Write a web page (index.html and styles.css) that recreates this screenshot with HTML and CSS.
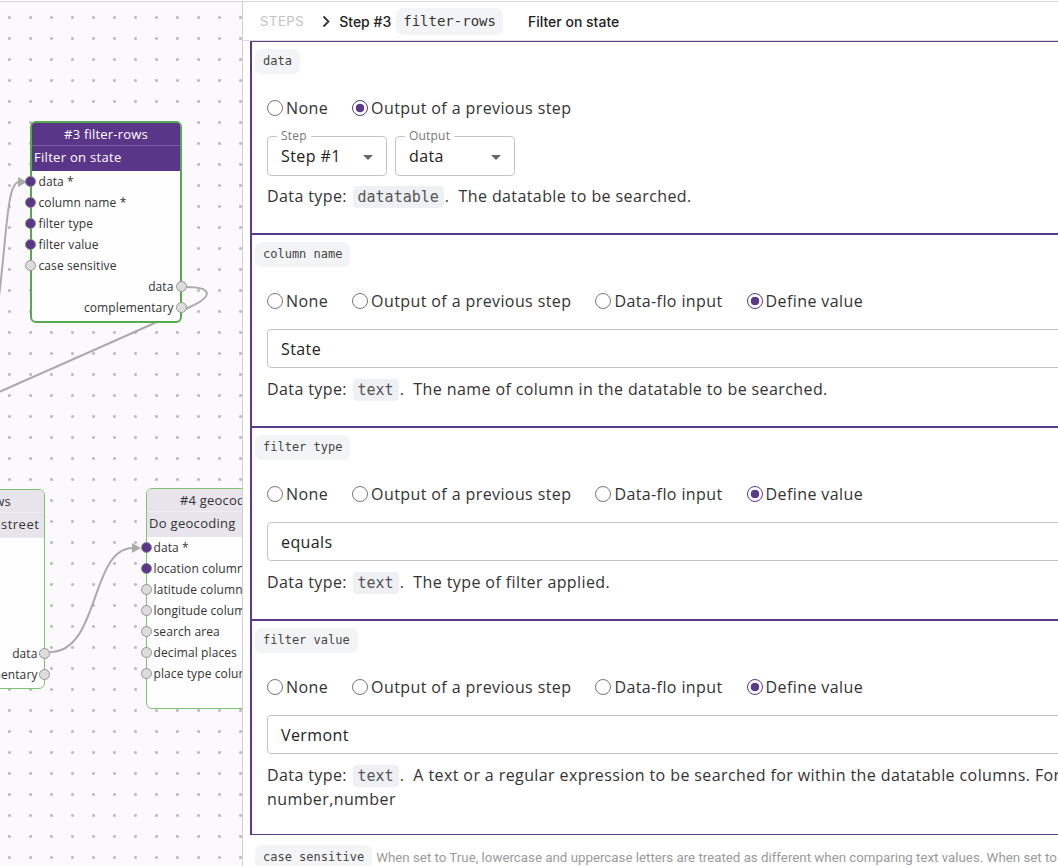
FILE: index.html
```html
<!DOCTYPE html>
<html lang="en">
<head>
<meta charset="utf-8">
<title>Steps</title>
<link rel="stylesheet" href="styles.css">
</head>
<body>
<div class="app">
  <div class="canvas">
    <svg class="edges" width="242" height="866" viewBox="0 0 242 866">
      <path d="M-12,360 C8,275 3,182 19,182"/>
      <polygon points="18,177 27,182 18,187"/>
      <path d="M186,287 C212,287 214,296 190,307 C140,330 60,365 -10,396"/>
      <path d="M50,652 C100,652 90,548 133,548"/>
      <polygon points="132,543 141,548 132,553"/>
    </svg>

    <div class="node node-left">
      <div class="node-title">#2 filter-rows</div>
      <div class="node-sub">Filter rows on a street</div>
      <div class="node-body">
        <div class="port in"><span class="dot filled"></span>data *</div>
        <div class="port in"><span class="dot filled"></span>column name *</div>
        <div class="port in"><span class="dot filled"></span>filter type</div>
        <div class="port in"><span class="dot filled"></span>filter value</div>
        <div class="port in"><span class="dot"></span>case sensitive</div>
        <div class="port out">data<span class="dot"></span></div>
        <div class="port out">complementary<span class="dot"></span></div>
      </div>
    </div>

    <div class="node node-geo">
      <div class="node-title">#4 geocoding</div>
      <div class="node-sub">Do geocoding</div>
      <div class="node-body">
        <div class="port in"><span class="dot filled"></span>data *</div>
        <div class="port in"><span class="dot filled"></span>location column</div>
        <div class="port in"><span class="dot"></span>latitude column</div>
        <div class="port in"><span class="dot"></span>longitude column</div>
        <div class="port in"><span class="dot"></span>search area</div>
        <div class="port in"><span class="dot"></span>decimal places</div>
        <div class="port in"><span class="dot"></span>place type column</div>
        <div class="port out">data<span class="dot"></span></div>
      </div>
    </div>

    <div class="node node-active">
      <div class="node-title">#3 filter-rows</div>
      <div class="node-sub">Filter on state</div>
      <div class="node-body">
        <div class="port in"><span class="dot filled"></span>data *</div>
        <div class="port in"><span class="dot filled"></span>column name *</div>
        <div class="port in"><span class="dot filled"></span>filter type</div>
        <div class="port in"><span class="dot filled"></span>filter value</div>
        <div class="port in"><span class="dot"></span>case sensitive</div>
        <div class="port out">data<span class="dot"></span></div>
        <div class="port out">complementary<span class="dot"></span></div>
      </div>
    </div>
  </div>

  <div class="panel">
    <div class="steps-bar">
      <span class="steps-label">STEPS</span>
      <svg class="chevron" width="9" height="13" viewBox="0 0 9 13"><polyline points="1.5,1.5 6.5,6.5 1.5,11.5"/></svg>
      <span class="step-num">Step #3</span>
      <span class="step-fn">filter-rows</span>
      <span class="step-title">Filter on state</span>
    </div>

    <div class="sections">
      <section class="param">
        <span class="tag">data</span>
        <div class="param-body">
          <div class="radios">
            <label class="radio"><span class="radio-circle"></span>None</label>
            <label class="radio checked"><span class="radio-circle"></span>Output of a previous step</label>
          </div>
          <div class="selects">
            <div class="select"><span class="select-label">Step</span>Step #1<span class="caret"></span></div>
            <div class="select"><span class="select-label">Output</span>data<span class="caret"></span></div>
          </div>
          <p class="dtype dtype-tight">Data type: <code class="code">datatable</code>.&nbsp; The datatable to be searched.</p>
        </div>
      </section>

      <section class="param">
        <span class="tag">column name</span>
        <div class="param-body">
          <div class="radios">
            <label class="radio"><span class="radio-circle"></span>None</label>
            <label class="radio"><span class="radio-circle"></span>Output of a previous step</label>
            <label class="radio"><span class="radio-circle"></span>Data-flo input</label>
            <label class="radio checked"><span class="radio-circle"></span>Define value</label>
          </div>
          <div class="input">State</div>
          <p class="dtype">Data type: <code class="code">text</code>.&nbsp; The name of column in the datatable to be searched.</p>
        </div>
      </section>

      <section class="param">
        <span class="tag">filter type</span>
        <div class="param-body">
          <div class="radios">
            <label class="radio"><span class="radio-circle"></span>None</label>
            <label class="radio"><span class="radio-circle"></span>Output of a previous step</label>
            <label class="radio"><span class="radio-circle"></span>Data-flo input</label>
            <label class="radio checked"><span class="radio-circle"></span>Define value</label>
          </div>
          <div class="input">equals</div>
          <p class="dtype">Data type: <code class="code">text</code>.&nbsp; The type of filter applied.</p>
        </div>
      </section>

      <section class="param param-last">
        <span class="tag">filter value</span>
        <div class="param-body">
          <div class="radios">
            <label class="radio"><span class="radio-circle"></span>None</label>
            <label class="radio"><span class="radio-circle"></span>Output of a previous step</label>
            <label class="radio"><span class="radio-circle"></span>Data-flo input</label>
            <label class="radio checked"><span class="radio-circle"></span>Define value</label>
          </div>
          <div class="input">Vermont</div>
          <p class="dtype">Data type: <code class="code">text</code>.&nbsp; A text or a regular expression to be searched for within the datatable columns. For ranges: number,number</p>
        </div>
      </section>

      <div class="param-collapsed">
        <span class="tag">case sensitive</span>
        <span class="param-help">When set to True, lowercase and uppercase letters are treated as different when comparing text values. When set to False, they are treated as equal.</span>
      </div>
    </div>
  </div>
</div>
</body>
</html>
```

FILE: styles.css
```css
* { box-sizing: border-box; }

html, body {
  margin: 0;
  height: 100%;
}

body {
  padding-top: 1px;
  background: #ffffff;
  overflow: hidden;
  font-family: "Open Sans", "Noto Sans", sans-serif;
  color: #333;
}

.app {
  display: flex;
  height: 865px;
  border-top: 1px solid #d4d4d4;
}

/* ---------- canvas ---------- */
.canvas {
  position: relative;
  flex: none;
  width: 243px;
  border-right: 1px solid #cfcfcf;
  overflow: hidden;
  background-color: #fcf9fc;
  background-image: radial-gradient(circle, #bfbbc4 1.2px, transparent 1.7px);
  background-size: 21px 21px;
  background-position: -1px 5px;
}

.edges {
  position: absolute;
  left: 0;
  top: -2px;
}

.edges path {
  fill: none;
  stroke: #ababab;
  stroke-width: 2;
}

.edges polygon {
  fill: #ababab;
}

.node {
  --bw: 1px;
  position: absolute;
  width: 152px;
  border: var(--bw) solid #7cc474;
  border-radius: 6px;
  background: #fdfefd;
  font-size: 12px;
  letter-spacing: 0.1px;
  color: #333;
  padding-bottom: 3px;
}

.node-active {
  --bw: 2.5px;
  left: 30px;
  top: 119px;
  border-color: #57a84f;
  background: #fefefe;
}

.node-geo {
  left: 146px;
  top: 486px;
}

.node-left {
  left: -107px;
  top: 487px;
}

.node-title {
  height: 22px;
  line-height: 23px;
  text-align: center;
  font-size: 13px;
  letter-spacing: 0.2px;
  background: #e7e5eb;
  border-radius: 5px 5px 0 0;
  white-space: nowrap;
}

.node-sub {
  height: 26px;
  line-height: 22px;
  padding-left: 2px;
  font-size: 13px;
  letter-spacing: 0.3px;
  background: #e7e5eb;
  border-top: 1px solid #efedf2;
  white-space: nowrap;
}

.node-left .node-sub {
  letter-spacing: 0.5px;
}

.node-active .node-title,
.node-active .node-sub {
  background: #5a3689;
  color: #ffffff;
}

.node-active .node-title { border-radius: 3px 3px 0 0; }

.node-active .node-sub {
  border-top-color: #7b5ca5;
}

.port {
  position: relative;
  height: 21px;
  line-height: 21px;
  padding-left: 6.5px;
  white-space: nowrap;
}

.port.out {
  text-align: right;
  padding-left: 0;
  padding-right: 6.5px;
}

.dot {
  position: absolute;
  top: 5px;
  width: 11px;
  height: 11px;
  border-radius: 50%;
  border: 1.5px solid #969696;
  background: #dcdcdc;
}

.port.in .dot { left: calc(var(--bw) / -2 - 5.5px); }
.port.out .dot { right: calc(var(--bw) / -2 - 5.5px); }

.dot.filled {
  background: #5a3689;
  border-color: #8c8c8c;
}

/* ---------- panel ---------- */
.panel {
  flex: 1;
  min-width: 0;
  overflow: hidden;
  background: #ffffff;
}

.steps-bar {
  display: flex;
  align-items: center;
  height: 39px;
  padding-left: 17px;
  border-bottom: 1px solid #dddddd;
  font-family: Inter, "Open Sans", sans-serif;
  font-size: 14px;
  font-weight: 500;
  color: #222;
}

.steps-label {
  font-size: 13px;
  font-weight: 400;
  letter-spacing: 0.6px;
  color: #c2c2c2;
}

.chevron {
  margin-left: 18px;
  margin-right: 8px;
}

.chevron polyline {
  fill: none;
  stroke: #333;
  stroke-width: 1.8;
}

.step-fn {
  margin-left: 5px;
  height: 27px;
  line-height: 27px;
  padding: 0 7px;
  border-radius: 7px;
  background: #f3f4f6;
  font-family: "DejaVu Sans Mono", monospace;
  font-size: 14px;
  font-weight: 400;
  color: #333;
}

.step-title {
  margin-left: 25px;
}

.sections {
  width: 950px;
  padding-left: 7px;
}

.param {
  display: block;
  border: 1px solid #5b3a8b;
  border-left-width: 2px;
  padding: 7px 0 25px 3px;
}

.param-last {
  padding-bottom: 23px;
}

.tag {
  display: block;
  width: fit-content;
  height: 25px;
  line-height: 25px;
  padding: 0 8px;
  border-radius: 7px;
  background: #f3f4f6;
  font-family: "DejaVu Sans Mono", monospace;
  font-size: 12px;
  color: #444;
  white-space: nowrap;
}

.param-body {
  padding-left: 12px;
}

.radios {
  display: flex;
  align-items: center;
  gap: 24px;
  height: 24px;
  margin-top: 22px;
}

.radio {
  display: flex;
  align-items: center;
  gap: 3px;
  font-size: 16px;
  line-height: 24px;
  letter-spacing: 0.4px;
  color: #333;
}

.radio-circle {
  width: 16px;
  height: 16px;
  border: 1.5px solid #777;
  border-radius: 50%;
}

.radio.checked .radio-circle {
  border-color: #5b3a8b;
  background: radial-gradient(circle, #5b3a8b 4px, transparent 4.6px);
}

.selects {
  display: flex;
  gap: 8px;
  margin-top: 16px;
}

.select {
  position: relative;
  display: flex;
  align-items: center;
  width: 120px;
  height: 40px;
  padding-left: 13px;
  border: 1px solid #c4c4c4;
  border-radius: 4px;
  font-size: 16px;
  letter-spacing: 0.4px;
  color: #222;
}

.select-label {
  position: absolute;
  top: -8px;
  left: 9px;
  padding: 0 4px;
  background: #fff;
  font-size: 12px;
  line-height: 14px;
  letter-spacing: 0.2px;
  color: #777;
}

.caret {
  position: absolute;
  right: 13px;
  top: 18px;
  border-top: 5px solid #666;
  border-left: 5px solid transparent;
  border-right: 5px solid transparent;
}

.input {
  display: flex;
  align-items: center;
  height: 39px;
  margin-top: 16px;
  padding-left: 13px;
  border: 1px solid #c4c4c4;
  border-radius: 4px;
  font-size: 16px;
  letter-spacing: 0.4px;
  color: #222;
}

.dtype {
  margin: 9px 0 0;
  font-size: 16px;
  line-height: 24px;
  letter-spacing: 0.4px;
  color: #333;
}

.dtype-tight {
  margin-top: 8px;
}

.code {
  margin: 0 1px;
  padding: 2px 5px;
  border-radius: 4px;
  background: #eef0f3;
  font-family: "DejaVu Sans Mono", monospace;
  font-size: 15px;
  line-height: 1;
  letter-spacing: 0;
  color: #555;
}

.param-collapsed {
  display: flex;
  align-items: center;
  gap: 4px;
  margin-top: 10px;
  padding-left: 5px;
  white-space: nowrap;
}

.param-help {
  font-family: Roboto, "Liberation Sans", sans-serif;
  font-size: 13.3px;
  color: #9a9a9a;
}
```
